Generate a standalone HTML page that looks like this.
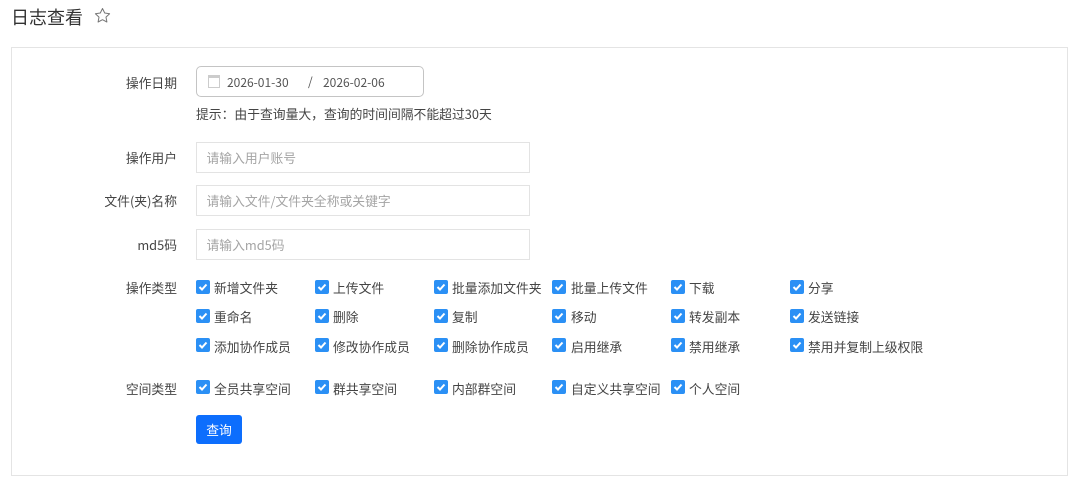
<!DOCTYPE html>
<html lang="zh"><head><meta charset="utf-8"><style>
html,body{margin:0;padding:0;background:#fff}
body{width:1080px;height:482px;position:relative;overflow:hidden;font-family:"Noto Sans CJK SC","Liberation Sans",sans-serif;font-size:12.8px;color:#444}
.a{position:absolute;white-space:nowrap;line-height:18px}
.l{position:absolute;right:903px;white-space:nowrap;line-height:18px;color:#444}
.i{position:absolute;left:196px;width:332px;height:29px;border:1px solid #e3e3e3;line-height:29px;color:#a4a4a4;text-indent:9.500px}
.c{position:absolute;width:14px;height:14px;background:#2b90f5;border-radius:2px}
.c svg{display:block}
.t{position:absolute;white-space:nowrap;line-height:18px;color:#444}
</style></head><body>
<div class="a" style="left:11px;top:5px;font-size:18px;line-height:24px;color:#333">日志查看</div>
<svg style="position:absolute;left:94px;top:7px" width="18" height="18" viewBox="0 0 18 18"><path d="M8.500 1.500L10.700 6 15.600 6.700 12 10.100 12.900 15 8.500 12.700 4.100 15 5 10.100 1.400 6.700 6.300 6z" fill="none" stroke="#777" stroke-width="1" stroke-linejoin="round"/></svg>
<div style="position:absolute;left:11px;top:47px;width:1055px;height:427px;border:1px solid #e4e4e4"></div>

<div class="l" style="top:74px">操作日期</div>
<div style="position:absolute;left:196px;top:66px;width:226px;height:29px;border:1px solid #c4c4c4;border-radius:5px"></div>
<svg style="position:absolute;left:208px;top:75px" width="12" height="13" viewBox="0 0 12 13"><rect x=".5" y="1.500" width="11" height="11" fill="none" stroke="#ccc"/><rect x="0" y="0" width="12" height="3" fill="#ccc"/></svg>
<div class="a" style="left:227px;top:74px;font-size:12px;color:#555">2026-01-30</div>
<div class="a" style="left:308px;top:73px;font-size:12px;color:#555">/</div>
<div class="a" style="left:323px;top:74px;font-size:12px;color:#555">2026-02-06</div>
<div class="a" style="left:196px;top:105px">提示：由于查询量大，查询的时间间隔不能超过30天</div>

<div class="l" style="top:149px">操作用户</div>
<div class="i" style="top:142px">请输入用户账号</div>
<div class="l" style="top:192px">文件(夹)名称</div>
<div class="i" style="top:185px">请输入文件/文件夹全称或关键字</div>
<div class="l" style="top:236px">md5码</div>
<div class="i" style="top:229px">请输入md5码</div>

<div class="l" style="top:279px">操作类型</div>
<div class="l" style="top:380px">空间类型</div>

<div class="c" style="left:196px;top:280px"><svg width="14" height="14" viewBox="0 0 14 14"><path d="M3.500 7l2.500 2.500 4.500-5" fill="none" stroke="#fff" stroke-width="2"/></svg></div><div class="t" style="left:214px;top:279px">新增文件夹</div>
<div class="c" style="left:315px;top:280px"><svg width="14" height="14" viewBox="0 0 14 14"><path d="M3.500 7l2.500 2.500 4.500-5" fill="none" stroke="#fff" stroke-width="2"/></svg></div><div class="t" style="left:333px;top:279px">上传文件</div>
<div class="c" style="left:434px;top:280px"><svg width="14" height="14" viewBox="0 0 14 14"><path d="M3.500 7l2.500 2.500 4.500-5" fill="none" stroke="#fff" stroke-width="2"/></svg></div><div class="t" style="left:452px;top:279px">批量添加文件夹</div>
<div class="c" style="left:552px;top:280px"><svg width="14" height="14" viewBox="0 0 14 14"><path d="M3.500 7l2.500 2.500 4.500-5" fill="none" stroke="#fff" stroke-width="2"/></svg></div><div class="t" style="left:571px;top:279px">批量上传文件</div>
<div class="c" style="left:671px;top:280px"><svg width="14" height="14" viewBox="0 0 14 14"><path d="M3.500 7l2.500 2.500 4.500-5" fill="none" stroke="#fff" stroke-width="2"/></svg></div><div class="t" style="left:689px;top:279px">下载</div>
<div class="c" style="left:790px;top:280px"><svg width="14" height="14" viewBox="0 0 14 14"><path d="M3.500 7l2.500 2.500 4.500-5" fill="none" stroke="#fff" stroke-width="2"/></svg></div><div class="t" style="left:808px;top:279px">分享</div>

<div class="c" style="left:196px;top:309px"><svg width="14" height="14" viewBox="0 0 14 14"><path d="M3.500 7l2.500 2.500 4.500-5" fill="none" stroke="#fff" stroke-width="2"/></svg></div><div class="t" style="left:214px;top:308px">重命名</div>
<div class="c" style="left:315px;top:309px"><svg width="14" height="14" viewBox="0 0 14 14"><path d="M3.500 7l2.500 2.500 4.500-5" fill="none" stroke="#fff" stroke-width="2"/></svg></div><div class="t" style="left:333px;top:308px">删除</div>
<div class="c" style="left:434px;top:309px"><svg width="14" height="14" viewBox="0 0 14 14"><path d="M3.500 7l2.500 2.500 4.500-5" fill="none" stroke="#fff" stroke-width="2"/></svg></div><div class="t" style="left:452px;top:308px">复制</div>
<div class="c" style="left:552px;top:309px"><svg width="14" height="14" viewBox="0 0 14 14"><path d="M3.500 7l2.500 2.500 4.500-5" fill="none" stroke="#fff" stroke-width="2"/></svg></div><div class="t" style="left:571px;top:308px">移动</div>
<div class="c" style="left:671px;top:309px"><svg width="14" height="14" viewBox="0 0 14 14"><path d="M3.500 7l2.500 2.500 4.500-5" fill="none" stroke="#fff" stroke-width="2"/></svg></div><div class="t" style="left:689px;top:308px">转发副本</div>
<div class="c" style="left:790px;top:309px"><svg width="14" height="14" viewBox="0 0 14 14"><path d="M3.500 7l2.500 2.500 4.500-5" fill="none" stroke="#fff" stroke-width="2"/></svg></div><div class="t" style="left:808px;top:308px">发送链接</div>

<div class="c" style="left:196px;top:338px"><svg width="14" height="14" viewBox="0 0 14 14"><path d="M3.500 7l2.500 2.500 4.500-5" fill="none" stroke="#fff" stroke-width="2"/></svg></div><div class="t" style="left:214px;top:338px">添加协作成员</div>
<div class="c" style="left:315px;top:338px"><svg width="14" height="14" viewBox="0 0 14 14"><path d="M3.500 7l2.500 2.500 4.500-5" fill="none" stroke="#fff" stroke-width="2"/></svg></div><div class="t" style="left:333px;top:338px">修改协作成员</div>
<div class="c" style="left:434px;top:338px"><svg width="14" height="14" viewBox="0 0 14 14"><path d="M3.500 7l2.500 2.500 4.500-5" fill="none" stroke="#fff" stroke-width="2"/></svg></div><div class="t" style="left:452px;top:338px">删除协作成员</div>
<div class="c" style="left:552px;top:338px"><svg width="14" height="14" viewBox="0 0 14 14"><path d="M3.500 7l2.500 2.500 4.500-5" fill="none" stroke="#fff" stroke-width="2"/></svg></div><div class="t" style="left:571px;top:338px">启用继承</div>
<div class="c" style="left:671px;top:338px"><svg width="14" height="14" viewBox="0 0 14 14"><path d="M3.500 7l2.500 2.500 4.500-5" fill="none" stroke="#fff" stroke-width="2"/></svg></div><div class="t" style="left:689px;top:338px">禁用继承</div>
<div class="c" style="left:790px;top:338px"><svg width="14" height="14" viewBox="0 0 14 14"><path d="M3.500 7l2.500 2.500 4.500-5" fill="none" stroke="#fff" stroke-width="2"/></svg></div><div class="t" style="left:808px;top:338px">禁用并复制上级权限</div>

<div class="c" style="left:196px;top:380px"><svg width="14" height="14" viewBox="0 0 14 14"><path d="M3.500 7l2.500 2.500 4.500-5" fill="none" stroke="#fff" stroke-width="2"/></svg></div><div class="t" style="left:214px;top:380px">全员共享空间</div>
<div class="c" style="left:315px;top:380px"><svg width="14" height="14" viewBox="0 0 14 14"><path d="M3.500 7l2.500 2.500 4.500-5" fill="none" stroke="#fff" stroke-width="2"/></svg></div><div class="t" style="left:333px;top:380px">群共享空间</div>
<div class="c" style="left:434px;top:380px"><svg width="14" height="14" viewBox="0 0 14 14"><path d="M3.500 7l2.500 2.500 4.500-5" fill="none" stroke="#fff" stroke-width="2"/></svg></div><div class="t" style="left:452px;top:380px">内部群空间</div>
<div class="c" style="left:552px;top:380px"><svg width="14" height="14" viewBox="0 0 14 14"><path d="M3.500 7l2.500 2.500 4.500-5" fill="none" stroke="#fff" stroke-width="2"/></svg></div><div class="t" style="left:571px;top:380px">自定义共享空间</div>
<div class="c" style="left:671px;top:380px"><svg width="14" height="14" viewBox="0 0 14 14"><path d="M3.500 7l2.500 2.500 4.500-5" fill="none" stroke="#fff" stroke-width="2"/></svg></div><div class="t" style="left:689px;top:380px">个人空间</div>

<div style="position:absolute;left:196px;top:415px;width:46px;height:29px;background:#0d6efd;border-radius:3px;color:#fff;text-align:center;line-height:29px">查询</div>
</body></html>
